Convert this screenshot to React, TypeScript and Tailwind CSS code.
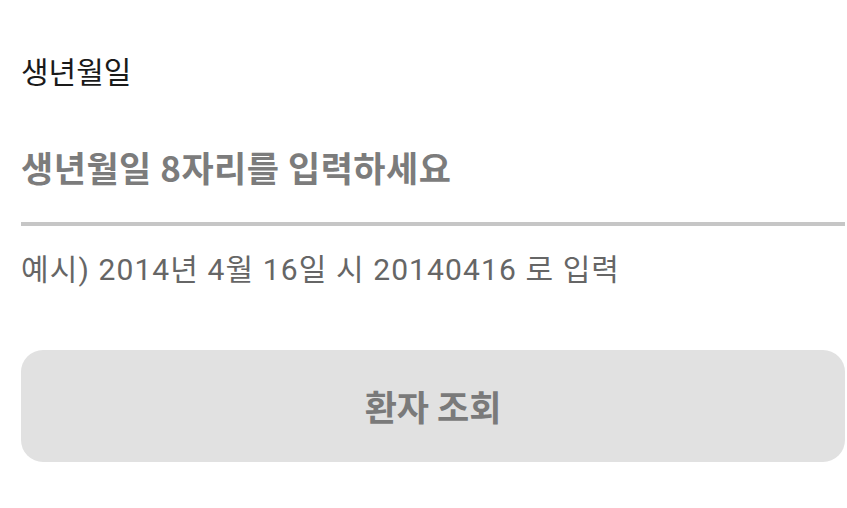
import { useState } from "react";

const font = "font-['Noto_Sans_CJK_KR','Noto_Sans',sans-serif]";

export default function App() {
  const [birth, setBirth] = useState("");

  return (
    <div className={`min-h-screen bg-white pl-[21px] pr-[2px] pt-[50px] ${font}`}>
      <label htmlFor="birth" className="block text-[30px] leading-[40px] text-[#1a1a1a]">
        생년월일
      </label>

      <div className="mt-[53px] border-b-4 border-[#c6c6c6] pb-[31px]">
        <input
          id="birth"
          value={birth}
          onChange={(e) => setBirth(e.target.value)}
          inputMode="numeric"
          maxLength={8}
          placeholder="생년월일 8자리를 입력하세요"
          className="block w-full bg-transparent text-[35px] leading-[48px] font-semibold tracking-[0.5px] text-[#333] outline-none placeholder:text-[#7c7c7c]"
        />
      </div>

      <p className="mt-[24px] font-['Roboto','Noto_Sans_CJK_KR',sans-serif] text-[30px] leading-[40px] tracking-[1.1px] text-[#666]">
        예시) 2014년 4월 16일 시 20140416 로 입력
      </p>

      <button
        disabled={birth.length !== 8}
        className="mt-[60px] flex h-[112px] w-full items-center justify-center rounded-[22px] bg-[#e1e1e1] text-[35px] font-semibold text-[#7a7a7a]"
      >
        환자 조회
      </button>
    </div>
  );
}
